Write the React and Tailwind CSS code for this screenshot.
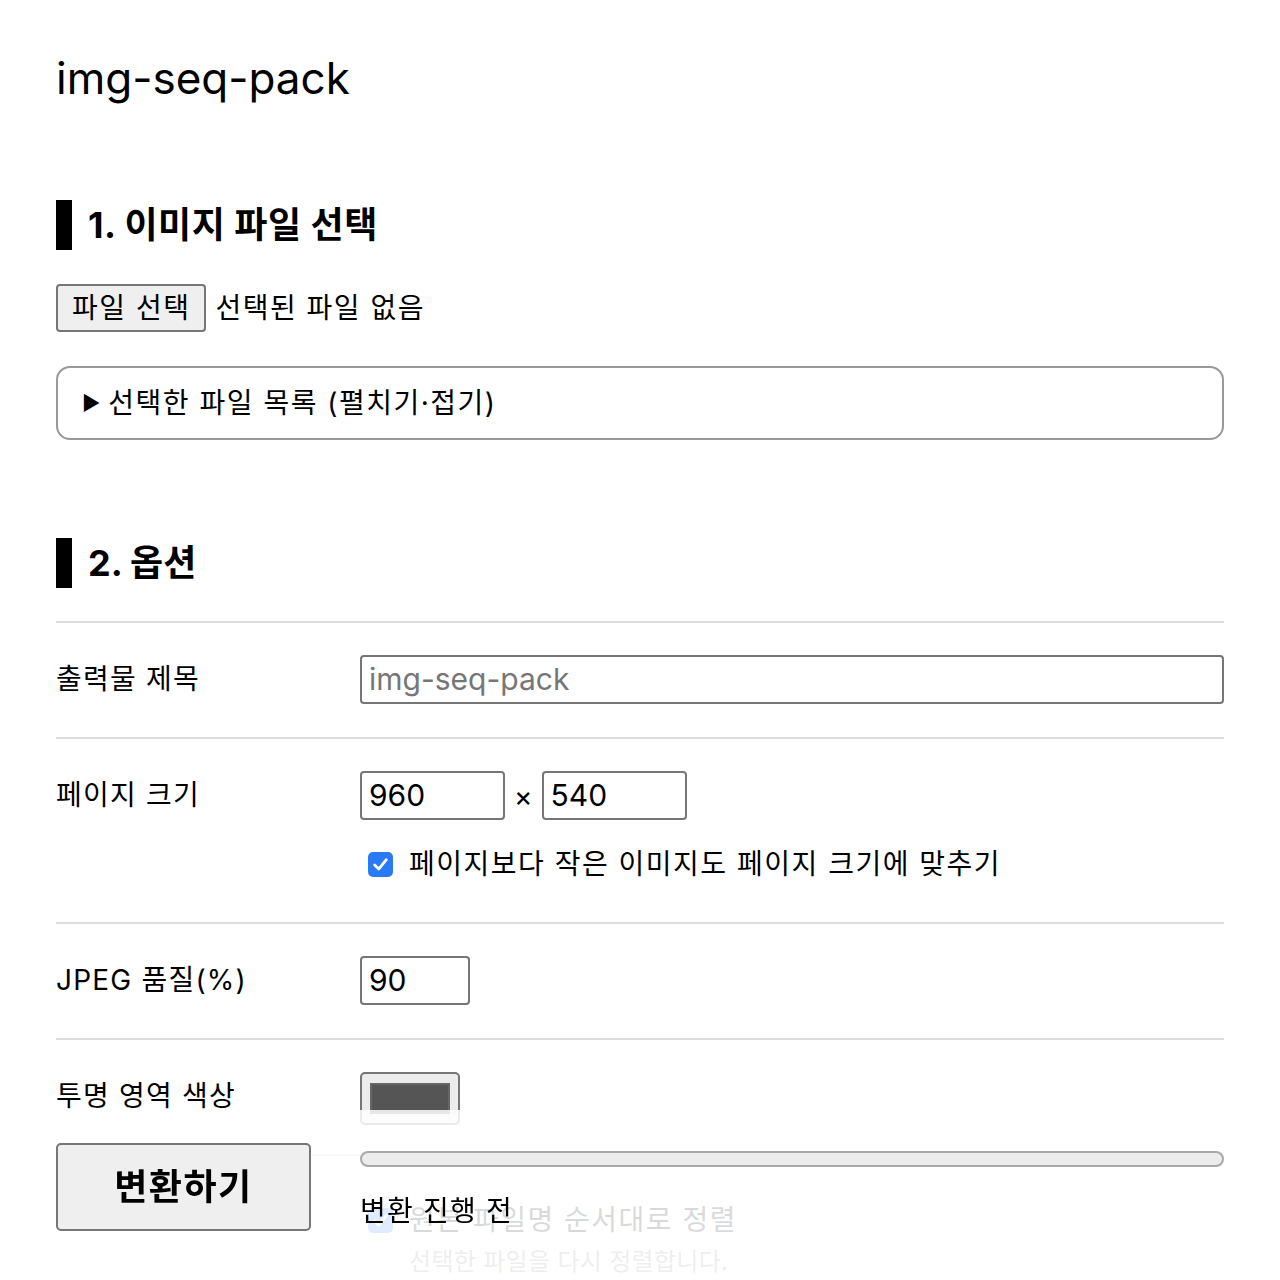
import React from "react";

const FONT = "font-['Inter','Noto_Sans_CJK_KR',sans-serif]";

function Row({ label, children }) {
  return (
    <div className="grid grid-cols-[304px_1fr] border-t-2 border-[#dddddd] pt-[32px] pb-[33px]">
      <div className="leading-[49px] tracking-[1.2px]">{label}</div>
      <div>{children}</div>
    </div>
  );
}

function Check({ children, sub }) {
  return (
    <div className="flex items-start gap-[16px] pl-[8px]">
      <span className="mt-[8px] w-[25px] h-[25px] rounded-[5px] bg-[#2b7af5] flex items-center justify-center shrink-0">
        <svg width="17" height="17" viewBox="0 0 16 16" fill="none">
          <path d="M2.5 8.5 L6.3 12.3 L13.5 3.5" stroke="white" strokeWidth="2.6" strokeLinecap="round" strokeLinejoin="round" />
        </svg>
      </span>
      <div>
        <div className="leading-[40px] tracking-[1.5px]">{children}</div>
        {sub && <div className="text-[24px] leading-[44px] text-[#8a8a8a] tracking-[0.3px]">{sub}</div>}
      </div>
    </div>
  );
}

const inputCls = "h-[49px] border-2 border-[#767676] rounded-[4px] px-[7px] flex items-center";

export default function App() {
  return (
    <div className={`${FONT} bg-white min-h-screen text-black text-[28px] px-[56px] pt-[50px] pb-[240px]`}>
      <h1 className="text-[44px] leading-[56px] font-normal">img-seq-pack</h1>

      <h2 className="mt-[94px] border-l-[16px] border-black pl-[16px] text-[36px] font-bold leading-[50px] tracking-[0.5px]">
        1. 이미지 파일 선택
      </h2>

      <div className="mt-[34px] flex items-center gap-[9px] tracking-[1.5px]">
        <span className="h-[48px] px-[14px] flex items-center border-2 border-[#767676] rounded-[4px] bg-[#efefef]">
          파일 선택
        </span>
        <span>선택된 파일 없음</span>
      </div>

      <div className="mt-[34px] h-[74px] border-2 border-[#999999] rounded-[14px] px-[24px] flex items-center">
        <span className="text-[20px] mr-[8px]">▶</span>
        <span className="tracking-[1.5px]">선택한 파일 목록 (펼치기·접기)</span>
      </div>

      <h2 className="mt-[98px] border-l-[16px] border-black pl-[16px] text-[36px] font-bold leading-[50px]">
        2. 옵션
      </h2>

      <div className="mt-[33px]">
        <Row label="출력물 제목">
          <div className={`${inputCls} text-[#767676] text-[30px]`}>img-seq-pack</div>
        </Row>
        <Row label="페이지 크기">
          <div className="flex items-center">
            <div className={`${inputCls} w-[145px] text-[30px]`}>960</div>
            <span className="mx-[9px]">×</span>
            <div className={`${inputCls} w-[145px] text-[30px]`}>540</div>
          </div>
          <div className="mt-[24px] mb-[5px]">
            <Check>페이지보다 작은 이미지도 페이지 크기에 맞추기</Check>
          </div>
        </Row>
        <Row label="JPEG 품질(%)">
          <div className={`${inputCls} w-[110px] text-[30px]`}>90</div>
        </Row>
        <Row label="투명 영역 색상">
          <div className="w-[100px] h-[53px] border-2 border-[#767676] rounded-[5px] bg-[#ececec] px-[8px] py-[9px] -mb-[4px]">
            <div className="w-full h-full bg-[#555555] border-2 border-[#666666]"></div>
          </div>
        </Row>
        <Row label="파일 재정렬">
          <div className="mt-[12px]">
            <Check sub="선택한 파일을 다시 정렬합니다.">원본 파일명 순서대로 정렬</Check>
          </div>
        </Row>
      </div>

      <div className="fixed left-0 right-0 bottom-0 h-[170px] bg-white/85 px-[56px] pt-[33px]">
        <div className="grid grid-cols-[304px_1fr]">
          <div>
            <button className="w-[255px] h-[88px] border-2 border-[#767676] rounded-[5px] bg-[#efefef] text-[36px] font-bold tracking-[1.5px]">
              변환하기
            </button>
          </div>
          <div>
            <div className="mt-[8px] h-[16px] rounded-full border-2 border-[#a8a8a8] bg-[#ececec]"></div>
            <div className="mt-[24px] leading-[40px] tracking-[1.2px]">변환 진행 전</div>
          </div>
        </div>
      </div>
    </div>
  );
}
